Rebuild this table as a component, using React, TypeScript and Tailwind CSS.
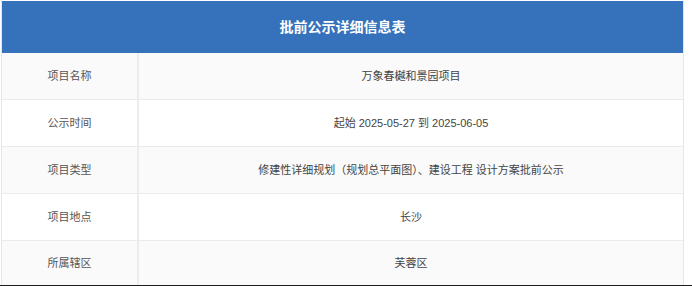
import React from "react";

const rows: [string, string][] = [
  ["项目名称", "万象春樾和景园项目"],
  ["公示时间", "起始 2025-05-27 到 2025-06-05"],
  ["项目类型", "修建性详细规划（规划总平面图）、建设工程 设计方案批前公示"],
  ["项目地点", "长沙"],
  ["所属辖区", "芙蓉区"],
];

export default function App() {
  return (
    <div
      className="w-[692px] h-[286px] bg-white overflow-hidden flex flex-col"
      style={{ fontFamily: '"Liberation Sans", "Noto Sans CJK SC", sans-serif' }}
    >
      <div className="flex-1 flex">
        <div className="ml-px w-[683px] flex flex-col border-l border-r border-[#e6e6e6]">
          <div className="h-[52px] mt-px bg-[#3572bb] flex items-center justify-center text-white font-bold text-[14px]">
            批前公示详细信息表
          </div>
          {rows.map(([k, v], i) => (
            <div
              key={k}
              className={`flex ${i === rows.length - 1 ? "h-[44px]" : "h-[47px] border-b border-[#ebebeb]"} ${i % 2 === 0 ? "bg-[#fafafa]" : "bg-white"}`}
            >
              <div className="w-[137px] border-r-2 border-[#ececec] flex items-center justify-center text-[11px] text-[#555]">
                {k}
              </div>
              <div className="flex-1 flex items-center justify-center text-[11px] text-[#444]">
                {v}
              </div>
            </div>
          ))}
        </div>
      </div>
      <div className="h-[2px] bg-[#1c1c1c]" />
    </div>
  );
}
